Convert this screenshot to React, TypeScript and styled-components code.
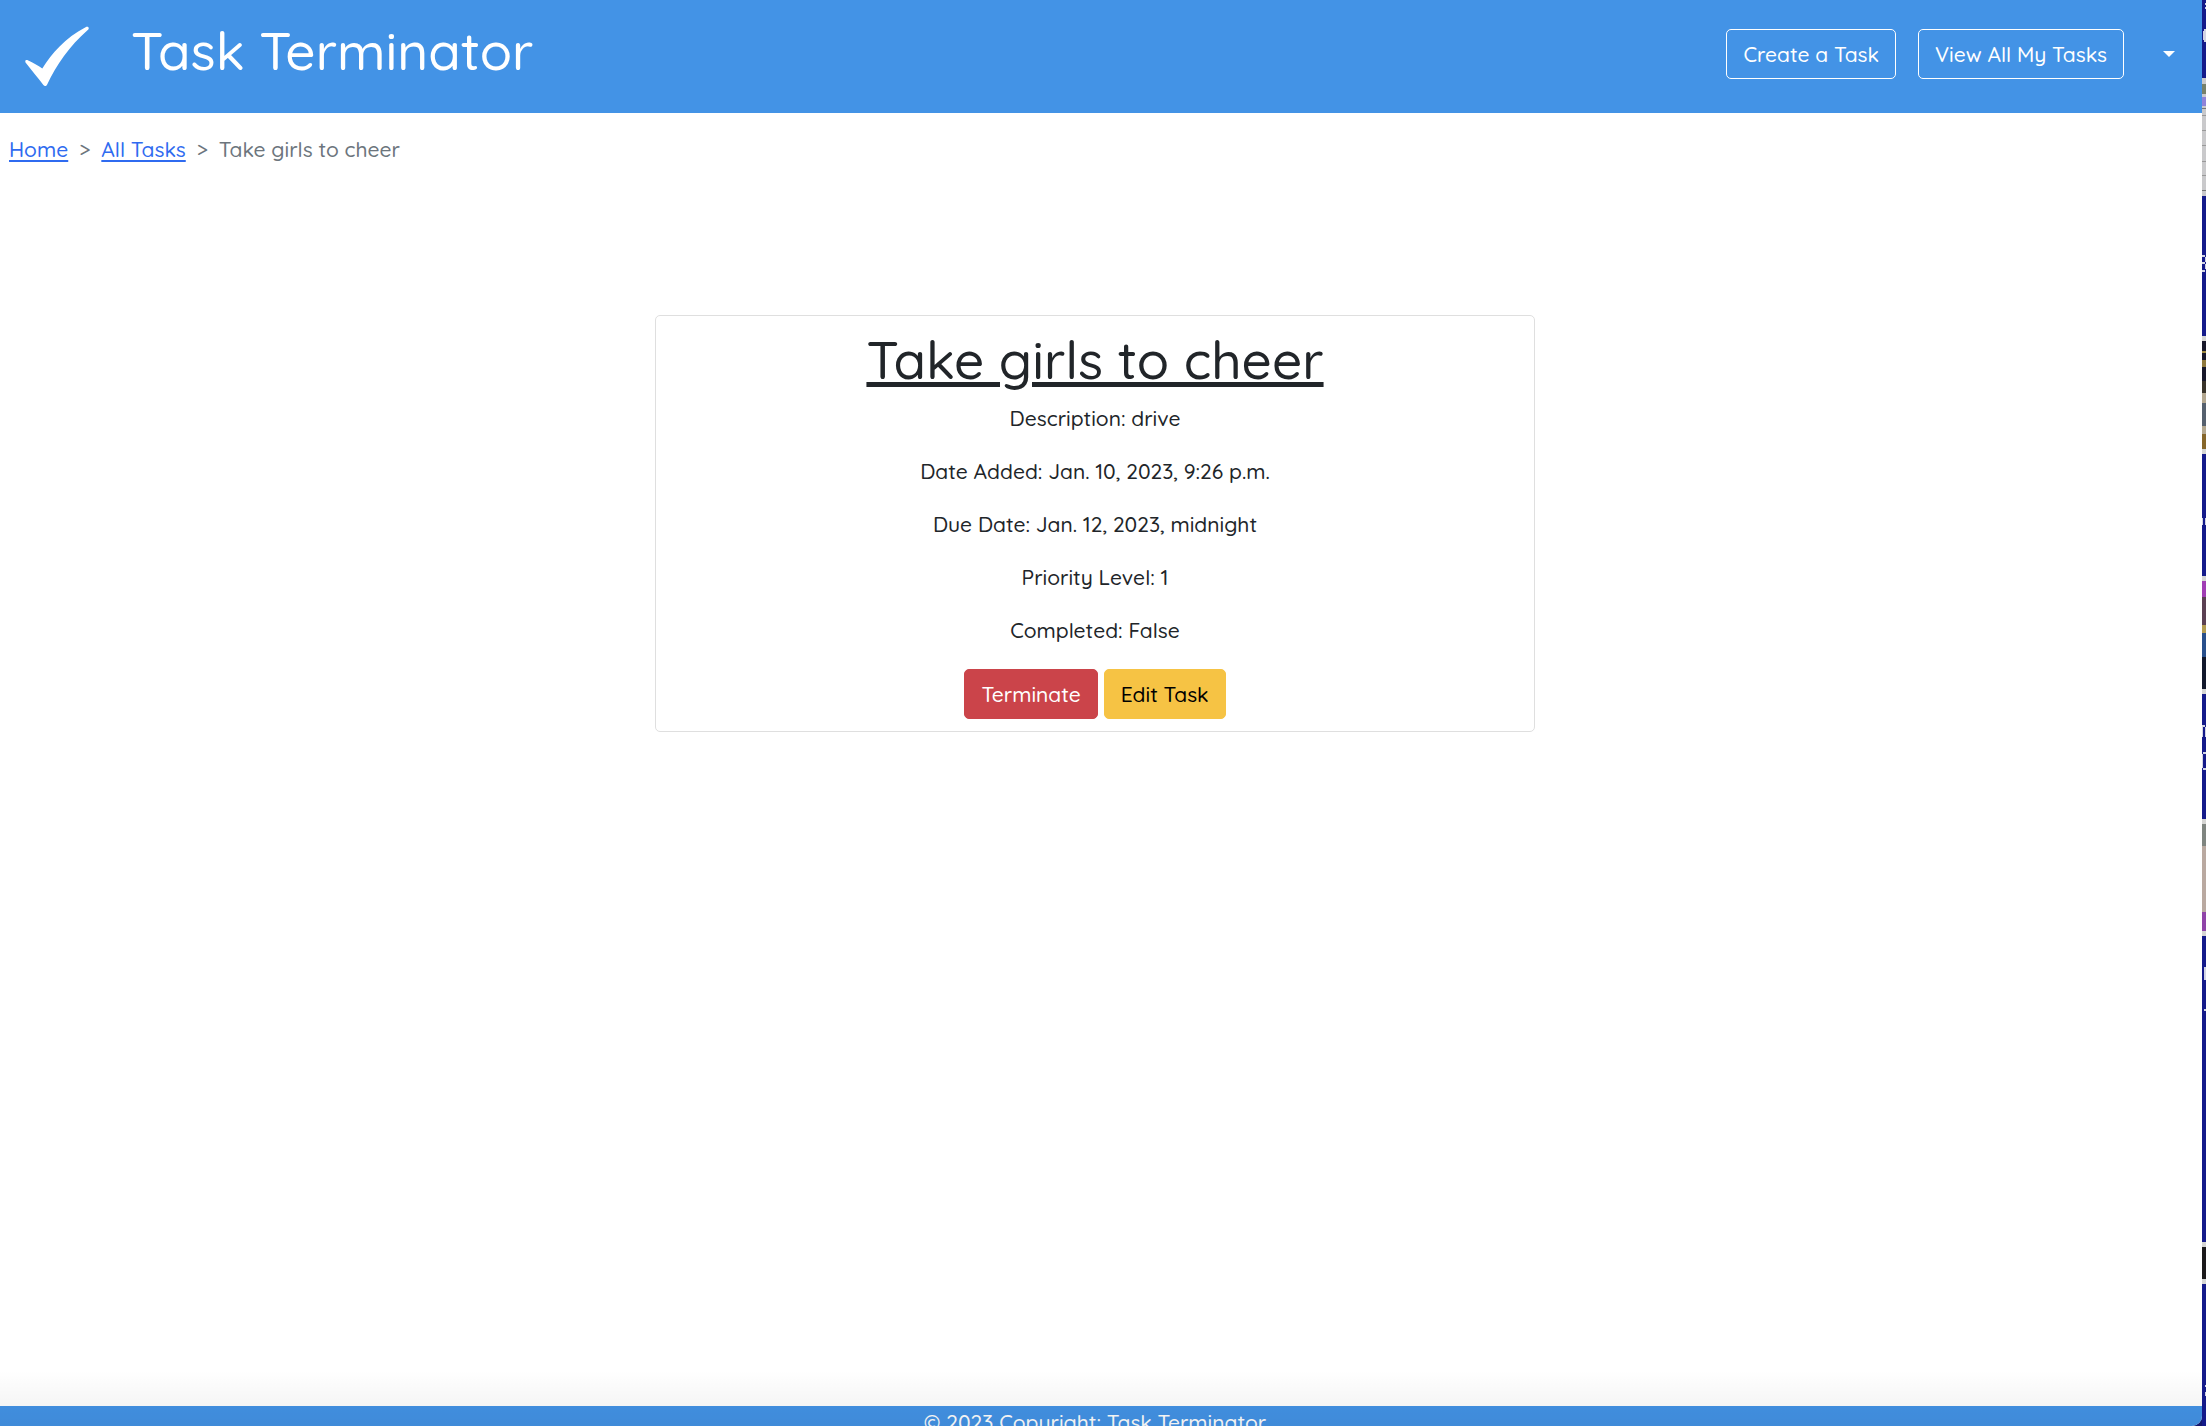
import React from "react";
import styled, { createGlobalStyle } from "styled-components";

const GlobalStyle = createGlobalStyle`
  *, *::before, *::after { box-sizing: border-box; }
  body {
    margin: 0;
    background: #fff;
    color: #212529;
    font-family: Quicksand, Lato, "Open Sans", sans-serif;
    font-size: 21px;
    font-weight: 500;
    line-height: 32px;
  }
`;

const Desktop = styled.div`
  display: flex;
  height: 100vh;
  overflow: hidden;
  background: #14186e;
`;

const Page = styled.div`
  position: relative;
  flex: 1;
  min-width: 0;
  display: flex;
  flex-direction: column;
  background: #fff;
  border-bottom-right-radius: 10px;
  overflow: hidden;
`;

const BottomShade = styled.div`
  position: absolute;
  inset: auto 0 0 0;
  height: 56px;
  background: linear-gradient(rgba(0, 0, 0, 0), rgba(0, 0, 0, 0.06));
  pointer-events: none;
`;

const Header = styled.header`
  display: flex;
  align-items: center;
  justify-content: space-between;
  min-height: 113px;
  padding: 0 10px 0 25px;
  background: #4393e6;
  color: #fff;
`;

const Brand = styled.a`
  display: flex;
  align-items: center;
  gap: 40px;
  color: inherit;
  text-decoration: none;
`;

const Title = styled.h1`
  margin: 0 0 14px;
  font-size: 53px;
  line-height: 64px;
  font-weight: 500;
`;

const Nav = styled.nav`
  display: flex;
  align-items: center;
  gap: 22px;
  padding-bottom: 6px;
`;

const Button = styled.button<{ $bg?: string; $fg?: string; $line?: string }>`
  padding: 8px 16px;
  border: 1px solid ${(p) => p.$line ?? p.$bg ?? "transparent"};
  border-radius: 5px;
  background: ${(p) => p.$bg ?? "transparent"};
  color: ${(p) => p.$fg ?? "#fff"};
  font: inherit;
  cursor: pointer;
`;

const MenuButton = styled(Button)`
  display: flex;
  align-items: center;
  height: 50px;
`;

const Caret = styled.span`
  border: 6px solid transparent;
  border-top-color: #fff;
  border-bottom: 0;
`;

const Main = styled.main`
  flex: 1;
  padding: 20px 12px 0 0;
`;

const Crumbs = styled.ol`
  display: flex;
  gap: 11px;
  margin: 0;
  padding: 0 9px;
  list-style: none;
  color: #6c757d;
`;

const Crumb = styled.li`
  display: flex;
  gap: 11px;

  & + &::before {
    content: ">";
  }
`;

const CrumbLink = styled.a`
  color: #2f6bf0;
  text-decoration: underline;
  text-underline-offset: 3px;
  text-decoration-thickness: 2px;
`;

const Card = styled.article`
  max-width: 880px;
  margin: 150px auto 0;
  padding: 11px 12px 12px;
  border: 1px solid #dfdfdf;
  border-radius: 5px;
  text-align: center;
`;

const CardTitle = styled.h2`
  margin: 0 0 11px;
  font-size: 53px;
  line-height: 64px;
  font-weight: 500;
  text-decoration: underline;
  text-decoration-thickness: 5px;
  text-underline-offset: 3px;
`;

const Field = styled.p`
  margin: 0 0 21px;
`;

const Actions = styled.div`
  display: flex;
  justify-content: center;
  gap: 6px;
  padding-top: 2px;
`;

const Footer = styled.footer`
  height: 20px;
  padding-right: 12px;
  background: #4393e6;
  color: #fff;
  text-align: center;
`;

const Wallpaper = styled.svg`
  flex: none;
  width: 4px;
  height: 100%;
  display: block;
`;

const fields = [
  "Description: drive",
  "Date Added: Jan. 10, 2023, 9:26 p.m.",
  "Due Date: Jan. 12, 2023, midnight",
  "Priority Level: 1",
  "Completed: False",
];

// Each entry is [top, height, colour] of one band of the window behind the page.
const bands: [number, number, string][] = [
  [78, 118, "#c9c9cb"],
  [84, 10, "#77816a"],
  [97, 9, "#8f83d8"],
  [108, 1, "#777"],
  [115, 1, "#999"],
  [130, 1, "#999"],
  [145, 1, "#999"],
  [161, 1, "#999"],
  [175, 1, "#999"],
  [190, 1, "#777"],
  [336, 118, "#d5d5d3"],
  [341, 40, "#17172a"],
  [351, 2, "#a08a40"],
  [360, 7, "#8f793d"],
  [381, 12, "#38332a"],
  [393, 41, "#b3a78f"],
  [403, 23, "#55606e"],
  [434, 15, "#86662a"],
  [576, 118, "#d5d5d3"],
  [581, 16, "#a03db4"],
  [597, 28, "#5b4052"],
  [625, 8, "#b39b50"],
  [633, 24, "#284f8b"],
  [657, 32, "#11172b"],
  [819, 117, "#d5d5d3"],
  [824, 22, "#7f8580"],
  [846, 66, "#b9a9a0"],
  [912, 19, "#8f43a8"],
  [1242, 42, "#d5d5d3"],
  [1247, 32, "#1b191b"],
];

// Slivers of lettering: [left, top, width, height].
const marks: [number, number, number, number][] = [
  [3, 3, 1, 2],
  [3, 7, 1, 2],
  [2, 29, 2, 13],
  [1, 31, 1, 9],
  [0, 255, 3, 2],
  [3, 257, 1, 5],
  [0, 262, 3, 2],
  [3, 264, 1, 5],
  [0, 270, 3, 2],
  [0, 518, 1, 7],
  [3, 518, 1, 7],
  [0, 725, 1, 12],
  [1, 725, 2, 2],
  [3, 727, 1, 10],
  [1, 752, 3, 2],
  [0, 754, 1, 14],
  [1, 768, 3, 2],
  [2, 967, 2, 13],
  [2, 1009, 2, 2],
  [3, 1385, 1, 2],
  [3, 1392, 1, 4],
];

function CheckLogo() {
  return (
    <svg width="66" height="62" viewBox="0 0 61 62" preserveAspectRatio="none" aria-hidden="true">
      <path
        fill="#fff"
        d="M0.500 36.500C-0.300 34.500 1 33.500 3 34.500C7.500 36.500 12 39.500 16 42.500C25 27 37 12 56 1.200C58.500 -0.200 60 2.200 58 4C41 20 29 39 20.500 58.500C19.500 60.500 18 60.500 17 59C12 52 6 44 0.500 36.500Z"
      />
    </svg>
  );
}

export default function App() {
  return (
    <>
      <GlobalStyle />
      <Desktop>
        <Page>
          <Header>
            <Brand href="#">
              <CheckLogo />
              <Title>Task Terminator</Title>
            </Brand>
            <Nav>
              <Button $line="#fff">Create a Task</Button>
              <Button $line="#fff">View All My Tasks</Button>
              <MenuButton aria-label="Account menu">
                <Caret />
              </MenuButton>
            </Nav>
          </Header>
          <Main>
            <nav aria-label="Breadcrumb">
              <Crumbs>
                <Crumb>
                  <CrumbLink href="#">Home</CrumbLink>
                </Crumb>
                <Crumb>
                  <CrumbLink href="#">All Tasks</CrumbLink>
                </Crumb>
                <Crumb aria-current="page">Take girls to cheer</Crumb>
              </Crumbs>
            </nav>
            <Card>
              <CardTitle>Take girls to cheer</CardTitle>
              {fields.map((text) => (
                <Field key={text}>{text}</Field>
              ))}
              <Actions>
                <Button $bg="#cb444a">Terminate</Button>
                <Button $bg="#f6c344" $fg="#000">
                  Edit Task
                </Button>
              </Actions>
            </Card>
          </Main>
          <Footer>© 2023 Copyright: Task Terminator</Footer>
          <BottomShade />
        </Page>
        <Wallpaper viewBox="0 0 4 1426" preserveAspectRatio="none" aria-hidden="true">
          <rect width="4" height="1426" fill="#141a8a" />
          {bands.map(([y, h, fill]) => (
            <rect key={y + "-" + h} y={y} width="4" height={h} fill={fill} />
          ))}
          {marks.map(([x, y, w, h]) => (
            <rect key={x + "-" + y} x={x} y={y} width={w} height={h} fill="#d2d4e4" />
          ))}
        </Wallpaper>
      </Desktop>
    </>
  );
}
